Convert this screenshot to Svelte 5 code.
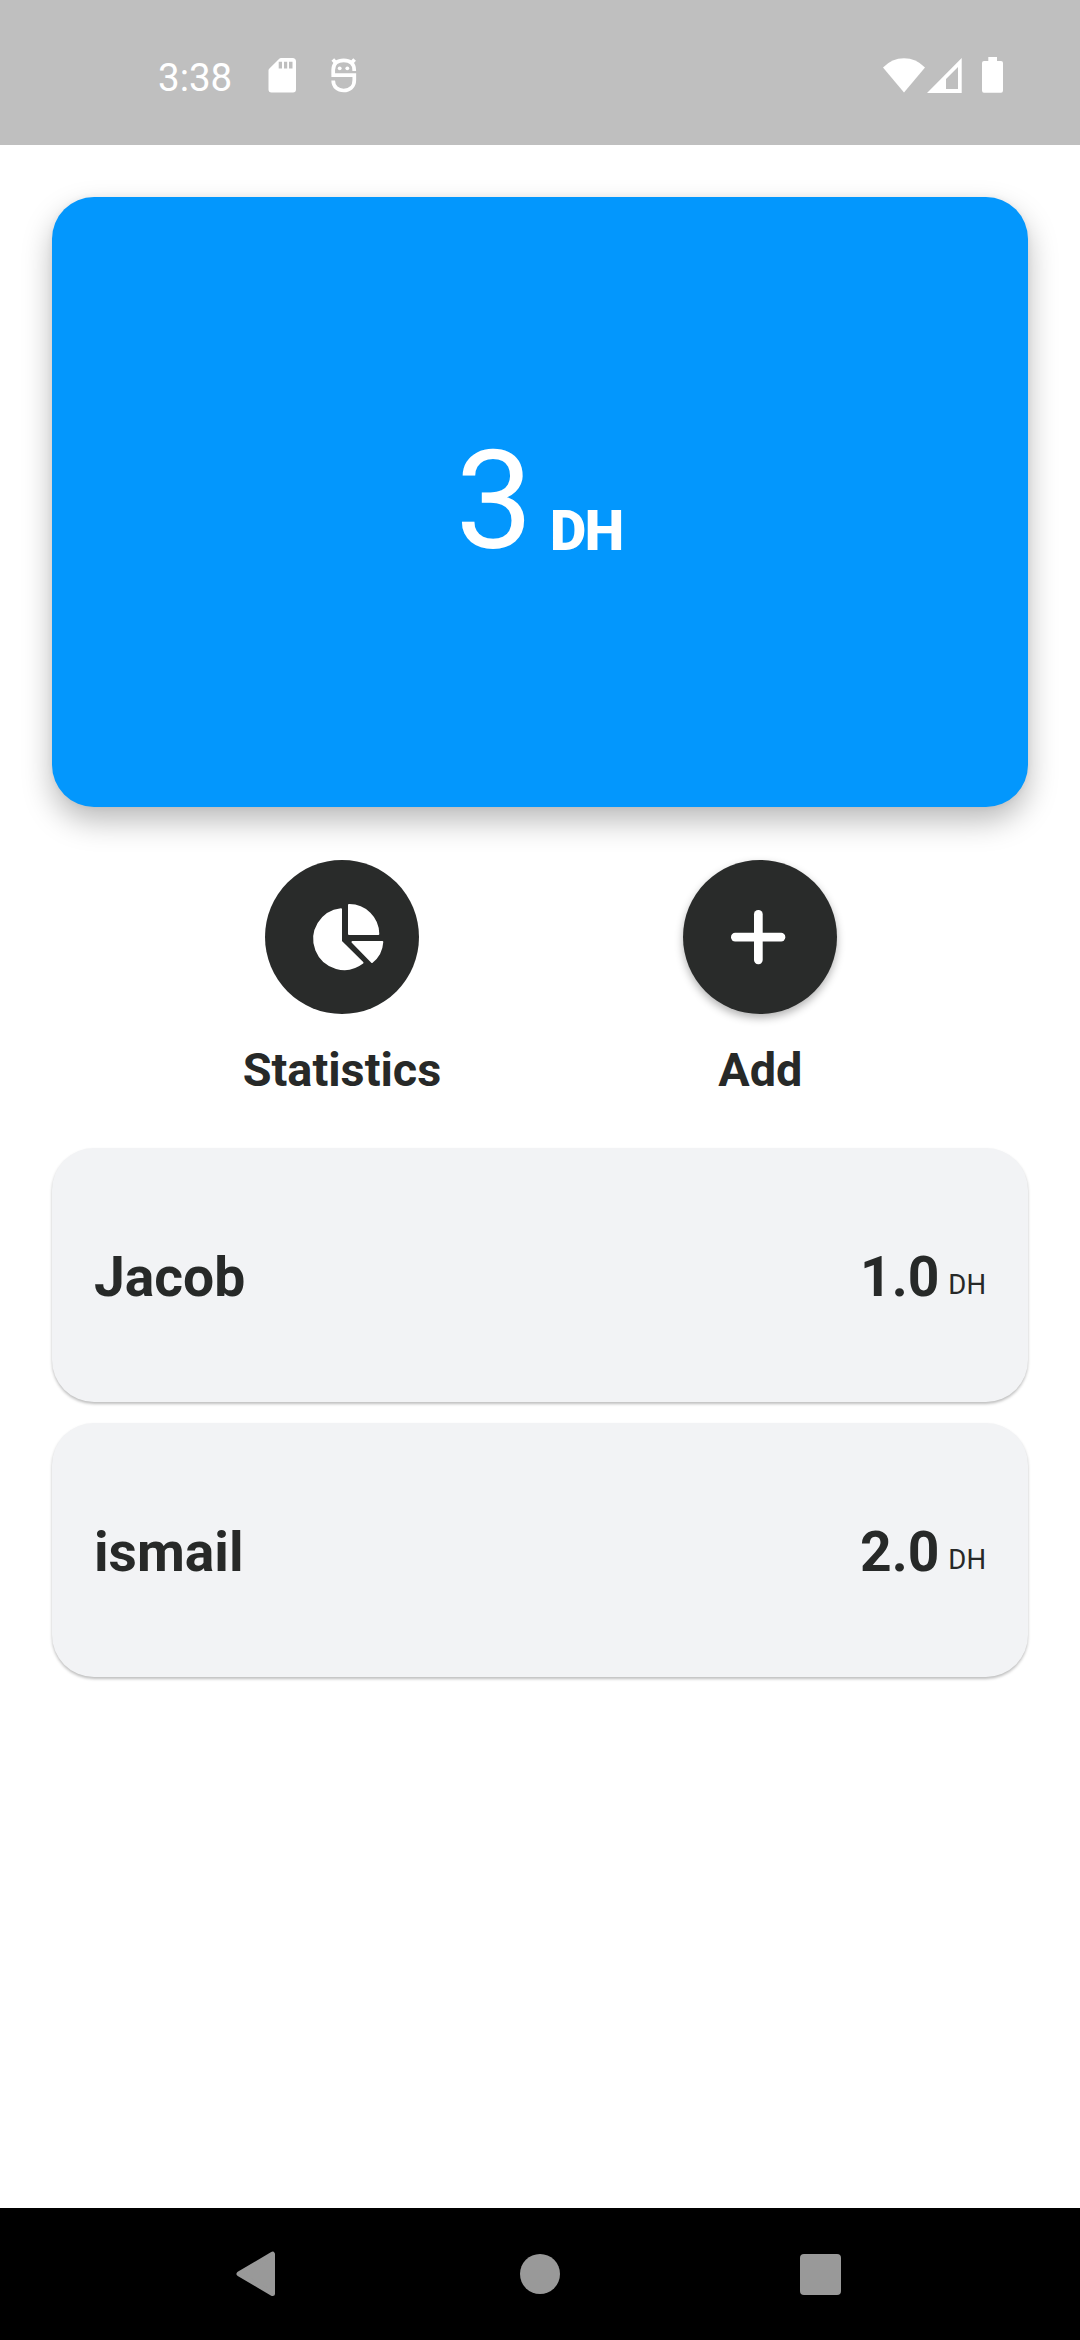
<script>
  const people = [
    { name: 'Jacob', amount: '1.0' },
    { name: 'ismail', amount: '2.0' }
  ];
</script>

<div class="screen">
  <header class="status">
    <span class="time">3:38</span>
    <svg class="sd" width="28" height="35" viewBox="0 0 28 35">
      <path fill="#fff" fill-rule="evenodd" d="M13 0H24.5Q28 0 28 3.5V31.500Q28 34.500 25 34.500H3.500Q.5 34.500 .5 31.500V12.500Q.5 11.500 1.200 10.800L11 1Q12 0 13 0ZM10.700 3.700V10.500H14V3.700ZM16 3.700V10.500H19.200V3.700ZM21 3.700V10.500H24.500V3.700Z" />
    </svg>
    <svg class="bot" width="26" height="35" viewBox="0 0 26 35">
      <g fill="none" stroke="#fff" stroke-width="3.700">
        <path d="M2.200 17V12C2.200 5.500 6.500 2.300 12.700 2.300S23.200 5.500 23.200 12V13M.4 17.100H23.300V22C23.300 29 18.500 32.500 12.700 32.500S2.200 29 2.200 22.500" />
        <path d="M1.800 1.500L5 5M23.600 1.500L20.400 5" />
      </g>
      <circle cx="8.700" cy="10.300" r="1.900" fill="#fff" /><circle cx="16.300" cy="10.300" r="1.900" fill="#fff" />
    </svg>
    <span class="grow"></span>
    <svg width="42" height="35" viewBox="0 0 42 35"><path fill="#fff" d="M0 9.500Q9 .3 21 .3T42 9.500L21 34.500Z" /></svg>
    <svg class="signal" width="35" height="35" viewBox="0 0 35 35"><path fill="#fff" fill-rule="evenodd" d="M34.700 0V35H0ZM31 9L19 21V31H31Z" /></svg>
    <svg class="battery" width="21" height="36" viewBox="0 0 21 36"><path fill="#fff" d="M6.300 0H15V4H19Q21 4 21 6V33.500Q21 35.700 19 35.700H2Q0 35.700 0 33.500V6Q0 4 2 4H6.300Z" /></svg>
  </header>

  <main>
    <section class="balance">
      <span class="total">3</span><span class="unit">DH</span>
    </section>

    <section class="actions">
      <div class="action">
        <svg class="disc" width="154" height="154" viewBox="0 0 154 154">
          <g fill="#fff" stroke="#fff" stroke-width="2" stroke-linejoin="round">
            <path d="M76 49.200V81.400L97.500 102.800A30 30 0 1 1 76 49.200Z" />
            <path d="M84 45.100A29 29 0 0 1 113.300 74H84Z" />
            <path d="M87.500 82H117.300Q116.500 94.500 107 102Z" />
          </g>
        </svg>
        <span>Statistics</span>
      </div>
      <div class="action">
        <svg class="disc raised" width="154" height="154" viewBox="0 0 154 154">
          <rect x="48" y="72.700" width="54.300" height="8.700" rx="4.200" fill="#fff" />
          <rect x="71" y="50" width="8.700" height="54.200" rx="4.200" fill="#fff" />
        </svg>
        <span>Add</span>
      </div>
    </section>

    <section class="people">
      {#each people as p}
        <article>
          <span class="name">{p.name}</span>
          <span class="amount">{p.amount}</span>
          <span class="currency">DH</span>
        </article>
      {/each}
    </section>
  </main>

  <footer>
    <svg width="40" height="46" viewBox="0 0 40 46"><path fill="#999" stroke="#999" stroke-width="5" stroke-linejoin="round" d="M36.500 3.200V42.500L3 22.900Z" /></svg>
    <svg class="home" width="40" height="40" viewBox="0 0 40 40"><circle cx="20" cy="20" r="20" fill="#999" /></svg>
    <svg width="41" height="41" viewBox="0 0 41 41"><rect width="41" height="41" rx="4" fill="#999" /></svg>
  </footer>
</div>

<style>
  :global(body) { margin: 0; background: #fff; }
  svg { display: block; flex: none; }
  .screen {
    width: 1080px; height: 2340px; display: flex; flex-direction: column;
    background: #fff; color: #272928; font-family: Roboto, sans-serif; line-height: 1;
  }
  .status {
    height: 145px; box-sizing: border-box; padding: 57px 77px 0 158px;
    display: flex; align-items: flex-start; background: #bfbfbf; color: #fff;
  }
  .status svg { margin-top: 1px; }
  .time { font-size: 38.5px; width: 110px; height: 36px; line-height: 41px; }
  .status .bot { margin-left: 35px; }
  .grow { flex: 1; }
  .status .signal { margin-left: 2px; }
  .status .battery { margin: 0 0 0 20px; }
  main { flex: 1; padding: 52px 52px 0; }
  .balance {
    height: 610px; border-radius: 42px; background: #0397fd; color: #fff;
    display: flex; justify-content: center; align-items: flex-start; line-height: 610px;
    box-sizing: border-box; padding-right: 2px;
    box-shadow: 0 14px 30px rgba(0, 0, 0, .27), 0 0 6px rgba(0, 0, 0, .06);
  }
  .total { font-size: 138px; line-height: 609px; }
  .unit { font-size: 56px; font-weight: 900; margin-left: 17px; letter-spacing: -1.500px; line-height: 668px; }
  .actions { display: flex; justify-content: center; gap: 242px; margin-top: 53px; }
  .action { display: flex; flex-direction: column; align-items: center; }
  .action span { font-size: 46.800px; font-weight: 700; line-height: 56px; margin-top: 28px; }
  .disc { border-radius: 50%; background: #292b2a; }
  .raised { box-shadow: 0 4px 8px rgba(0, 0, 0, .3); }
  .people { display: flex; flex-direction: column; gap: 21px; margin-top: 50px; }
  article {
    height: 254px; box-sizing: border-box; border-radius: 42px; padding: 0 42px;
    display: flex; align-items: flex-start; background: #f2f3f5;
    box-shadow: 0 2px 3px rgba(0, 0, 0, .26);
  }
  .name, .amount { font-size: 55.200px; font-weight: 700; line-height: 259px; }
  .name { flex: 1; }
  .currency { font-size: 27.500px; margin-left: 9px; line-height: 274px; }
  .home { margin-left: 4px; }
  footer {
    height: 132px; background: #000; display: flex; align-items: center;
    justify-content: space-between; padding: 0 239px 0 236px;
  }
</style>
